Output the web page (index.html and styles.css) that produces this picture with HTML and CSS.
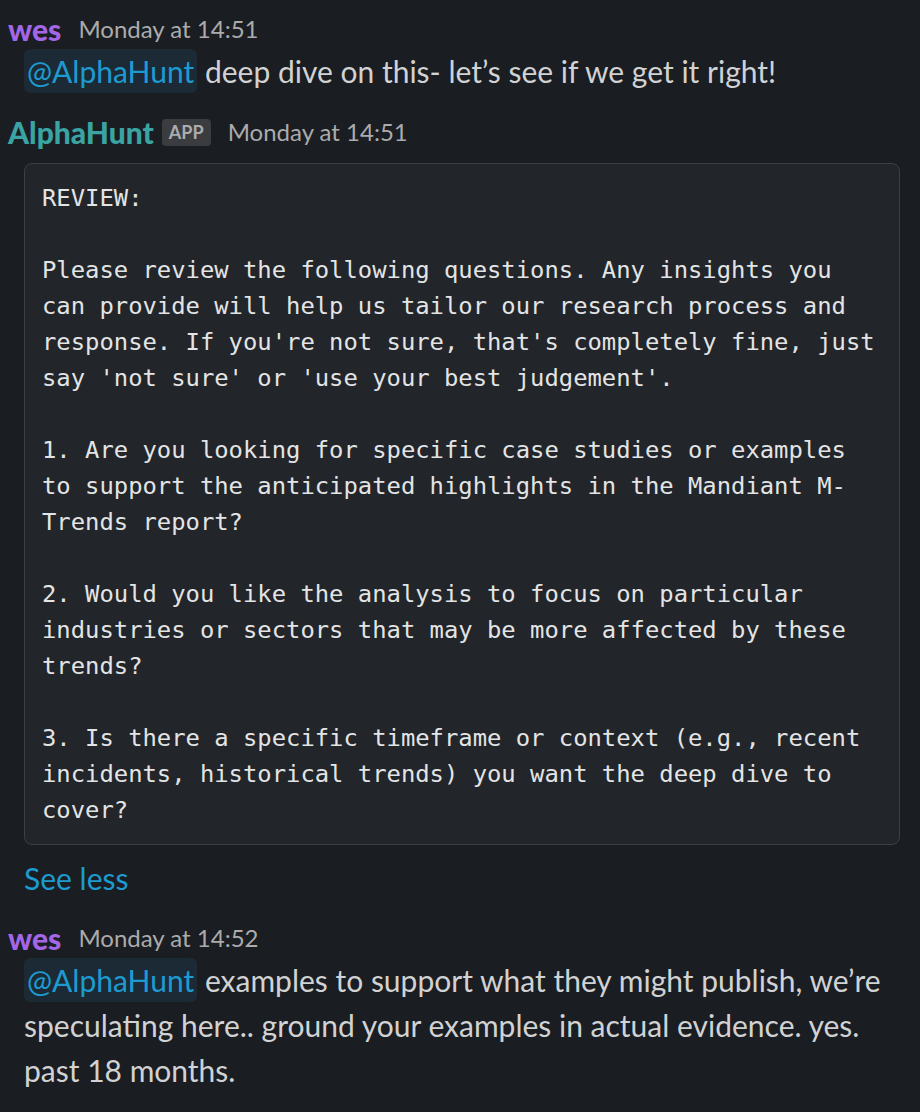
FILE: index.html
```html
<!DOCTYPE html>
<html>
<head>
<meta charset="utf-8">
<link rel="stylesheet" href="styles.css">
</head>
<body>
<div class="thread">
  <div class="msg">
    <div class="head">
      <span class="name user">wes</span>
      <span class="time">Monday at 14:51</span>
    </div>
    <div class="text"><span class="mention">@AlphaHunt</span> deep dive on this- let’s see if we get it right!</div>
  </div>

  <div class="msg bot">
    <div class="head">
      <span class="name app">AlphaHunt</span>
      <span class="badge">APP</span>
      <span class="time">Monday at 14:51</span>
    </div>
    <pre class="code">REVIEW:

Please review the following questions. Any insights you
can provide will help us tailor our research process and
response. If you're not sure, that's completely fine, just
say 'not sure' or 'use your best judgement'.

1. Are you looking for specific case studies or examples
to support the anticipated highlights in the Mandiant M-
Trends report?

2. Would you like the analysis to focus on particular
industries or sectors that may be more affected by these
trends?

3. Is there a specific timeframe or context (e.g., recent
incidents, historical trends) you want the deep dive to
cover?</pre>
    <div class="more">See less</div>
  </div>

  <div class="msg">
    <div class="head">
      <span class="name user">wes</span>
      <span class="time">Monday at 14:52</span>
    </div>
    <div class="text"><span class="mention">@AlphaHunt</span> examples to support what they might publish, we’re speculating here.. ground your examples in actual evidence. yes. past 18 months.</div>
  </div>
</div>
</body>
</html>
```

FILE: styles.css
```css
html, body {
  margin: 0;
  padding: 0;
  background: #1a1d21;
}
body {
  font-family: Lato, "Noto Sans", sans-serif;
  color: #d1d2d3;
  width: 920px;
  height: 1112px;
  overflow: hidden;
}
.thread {
  display: flex;
  flex-direction: column;
  padding: 7px 20px 0 8px;
}
.msg {
  display: flex;
  flex-direction: column;
}
.msg + .msg {
  margin-top: 16px;
}
.head {
  display: flex;
  align-items: center;
  gap: 17px;
  height: 44px;
}
.name {
  font-weight: 900;
  font-size: 30px;
  line-height: 44px;
}
.user { color: #a266e6; }
.app { color: #3aa3a3; }
.time {
  font-size: 24px;
  color: #ababad;
  line-height: 44px;
}
.badge {
  font-size: 18px;
  font-weight: 700;
  color: #ababad;
  background: #3b3c40;
  border-radius: 4px;
  padding: 0 7px;
  line-height: 27px;
  margin-left: -9px;
}
.text {
  padding-left: 16px;
  margin-top: -2px;
  font-size: 30px;
  line-height: 45px;
}
.mention {
  color: #1d9bd1;
  background: #1b2a35;
  border-radius: 6px;
  padding: 4px 3px;
}
.code {
  margin: 9px 0 0 16px;
  padding: 16px 17px;
  background: #222529;
  border: 1px solid #3d3f43;
  border-radius: 8px;
  font-family: "DejaVu Sans Mono", monospace;
  font-size: 23.85px;
  line-height: 36px;
  color: #e3e4e5;
  white-space: pre;
}
.more {
  padding-left: 16px;
  margin-top: 11px;
  font-size: 30px;
  line-height: 44px;
  color: #1d9bd1;
}
```
